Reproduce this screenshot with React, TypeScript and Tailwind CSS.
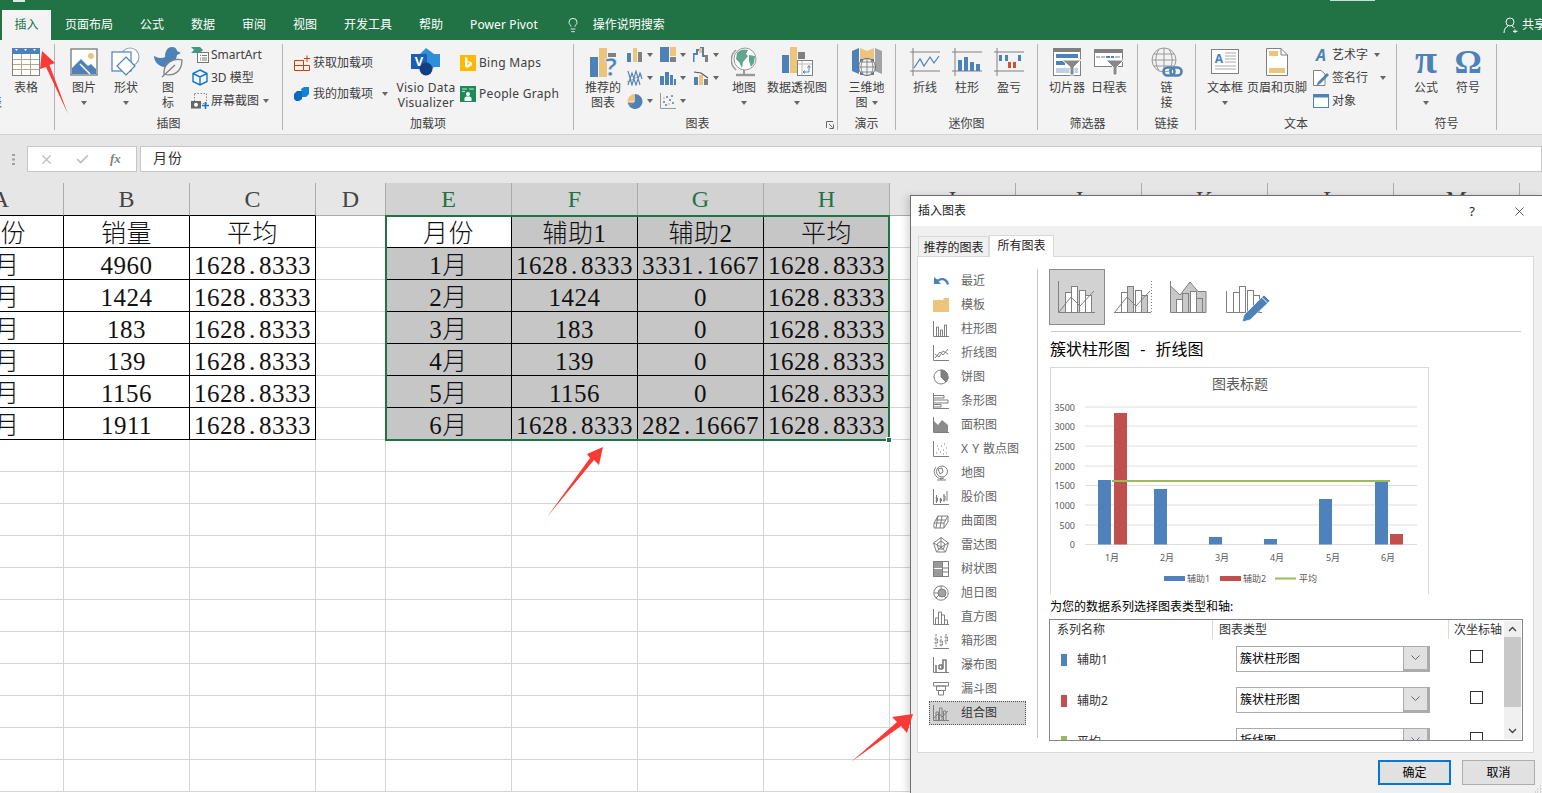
import React from 'react';
import { Lightbulb, X, Check } from 'lucide-react';

const BL = '#4d82b8', TN = '#ecc47c', GY = '#808080';
type P = { w: number; h: number; children?: React.ReactNode };
const S = ({ w, h, children }: P) => (
  <svg width={w} height={h} viewBox={`0 0 ${w} ${h}`} className="shrink-0 block">{children}</svg>
);
const Arrow = () => <span className="inline-block w-0 h-0 border-x-[3.5px] border-x-transparent border-t-[4px] border-t-[#666]" />;

const Big = ({ w, icon, l1, l2, arrow }: { w: string; icon: React.ReactNode; l1: string; l2?: string; arrow?: 'line2' | 'inline' }) => (
  <div className={`${w} shrink-0 flex flex-col items-center`}>
    <div className="h-[36px] flex items-center justify-center">{icon}</div>
    <div className="leading-[15px] whitespace-nowrap">{l1}</div>
    {l2 && <div className="leading-[15px] whitespace-nowrap flex items-center gap-1">{l2}{arrow === 'inline' && <Arrow />}</div>}
    {arrow === 'line2' && <div className="h-[15px] flex items-center"><Arrow /></div>}
  </div>
);
const Small = ({ icon, text, arrow, h, gap }: { icon: React.ReactNode; text: string; arrow?: string; h: string; gap: string }) => (
  <div className={`flex items-center ${h} whitespace-nowrap`}>
    <div className={`w-[16px] flex justify-center ${gap}`}>{icon}</div>
    <span>{text}</span>
    {arrow && <span className={`flex ${arrow}`}><Arrow /></span>}
  </div>
);
const Group = ({ w, label, children, labelCls }: { w: string; label: string; children: React.ReactNode; labelCls?: string }) => (
  <div className={`${w} h-[86px] shrink-0 relative flex flex-col border-r border-[#b4b4b4]`}>
    <div className="h-[72px] flex">{children}</div>
    <div className={`h-[14px] leading-[16px] text-center ${labelCls ?? ''}`}>{label}</div>
  </div>
);

/* ---------- ribbon icons ---------- */
const TableIc = () => (
  <S w={28} h={28}>
    <rect x=".5" y=".5" width="27" height="27" fill="#fff" stroke={GY} />
    <rect width="28" height="6" fill={BL} />
    <path d="M1 11.5H27M1 16.5H27M1 21.5H27M9.5 6V27M18.5 6V27" stroke="#b5a58c" fill="none" />
    <path d="M3 1h3l-1.5 2zM12 1h3l-1.5 2zM21 1h3l-1.5 2z" fill="#fff" />
  </S>
);
const PicIc = () => (
  <S w={28} h={28}>
    <rect x="1" y="1" width="26" height="26" fill="#fff" stroke={GY} strokeWidth="1.4" />
    <circle cx="21" cy="8" r="3" fill={TN} />
    <path d="M2 26V20L11 11 18 18 21 16 26 21V26Z" fill={BL} />
    <path d="M10 16 20 26" stroke="#fff" strokeWidth="1.4" />
  </S>
);
const ShapeIc = () => (
  <S w={30} h={30}>
    <circle cx="19" cy="10" r="9" fill="#fff" stroke="#8aa6c6" strokeWidth="1.2" />
    <rect x="1" y="5" width="19" height="19" fill="#fff" stroke={BL} strokeWidth="1.2" />
    <path d="M15 10 24 19 15 28 6 19Z" fill="#fff" stroke={BL} strokeWidth="1.2" />
  </S>
);
const IconsIc = () => (
  <S w={30} h={32}>
    <path d="M19 1c3 0 5 2 5 4l4 2-4 2c-1 8-7 13-13 12C5 20 1 15 1 10c4 2 8 3 11 1 0-5 2-10 7-10z" fill={BL} />
    <path d="M29 14C22 12 10 16 11 28 20 31 29 26 29 14z" fill="#f3f3f3" stroke={GY} strokeWidth="1.3" />
    <path d="M9 31 22 19" stroke={GY} strokeWidth="1.3" />
  </S>
);
const SmartIc = () => (
  <S w={18} h={16}>
    <path d="M0 0H9L12 3 9 6H0L3 3Z" fill="#3f9a82" />
    <rect x="6.5" y="5.5" width="11" height="10" fill="#fff" stroke="#777" />
    <path d="M9 8.5h1M11 8.5h5M9 11h1M11 11h5M9 13h1M11 13h5" stroke="#777" />
  </S>
);
const D3Ic = () => (
  <S w={16} h={17}>
    <path d="M8 1 15 4.5V12.5L8 16 1 12.5V4.5ZM1 4.5 8 8 15 4.5M8 8V16" fill="none" stroke="#1577c4" strokeWidth="1.4" />
  </S>
);
const ShotIc = () => (
  <S w={18} h={16}>
    <rect x="3.5" y=".5" width="12" height="10" fill="none" stroke="#888" strokeDasharray="1.5 1.5" />
    <rect x="0" y="8" width="10" height="7.5" fill="#666" />
    <circle cx="5" cy="11.8" r="2" fill="#fff" />
    <path d="M14.5 9V16M11 12.5H18" stroke="#1577c4" strokeWidth="1.6" />
  </S>
);
const GetIc = () => (
  <S w={16} h={16}>
    <path d="M.5 5.500H9.500V15.500H.5ZM.5 10.500H15.500V15.500H9.500M9.500 5.500V10.500" fill="none" stroke="#d83b01" />
    <path d="M13 .5V7M10 3.500H16" stroke="#d83b01" />
  </S>
);
const MineIc = () => (
  <S w={16} h={16}>
    <path d="M0 8 3 5H8V13L5 15H2L0 13Z" fill="#0a6bc1" />
    <path d="M7 3 10 1H15V8L12 11H8V6Z" fill="#0f85d8" />
  </S>
);
const VisioIc = () => (
  <S w={30} h={28}>
    <path d="M15 0 23 6H29V19H23L15 27 8 20V7Z" fill="#2e8fd8" />
    <rect x="0" y="6" width="16" height="15" fill="#1a5fb4" />
    <circle cx="15" cy="21" r="6.5" fill="#123f80" />
    <text x="8" y="18" textAnchor="middle" fontSize="13" fontWeight="700" fill="#fff">V</text>
  </S>
);
const BingIc = () => (
  <S w={16} h={16}>
    <rect width="16" height="16" fill="#ffb900" />
    <path d="M5 2 7.500 3V10L10 8.800 8.600 8 8 6 12 7.500V10L7.500 13 5 11.500Z" fill="#fff" />
  </S>
);
const PeopleIc = () => (
  <S w={16} h={16}>
    <rect width="16" height="16" fill="#1e8a5a" />
    <path d="M2 3H7M2 5.500H5M9 3H14" stroke="#bfe3d2" />
    <circle cx="8" cy="8" r="2" fill="#fff" />
    <path d="M4.500 15V12L6 10.500H10L11.500 12V15Z" fill="#fff" />
  </S>
);
const RecIc = () => (
  <S w={30} h={30}>
    <rect x="0" y="10" width="8" height="20" fill={BL} />
    <rect x="9" y="1" width="8" height="29" fill={TN} />
    <rect x="18" y="6" width="8" height="4" fill={GY} />
    <text x="21" y="29" textAnchor="middle" fontSize="25" fontWeight="700" fill={BL} stroke="#f3f3f3" strokeWidth=".6">?</text>
  </S>
);
const Mini = ({ n }: { n: number }) => {
  const a = [
    <><rect x="0" y="6" width="4" height="9" fill={BL} /><rect x="6" y="1" width="4" height="14" fill={TN} /><rect x="11" y="5" width="4" height="10" fill={GY} /></>,
    <><rect x="0" y="0" width="9" height="15" fill={BL} /><rect x="10" y="0" width="7" height="9" fill={TN} /><rect x="10" y="10" width="7" height="5" fill={GY} /></>,
    <><path d="M.5 15V7H4V3H8V1H10V9H13V15" fill="none" stroke={BL} strokeWidth="2" /><rect x="6" y="1" width="3" height="5" fill={TN} /><rect x="12" y="8" width="3" height="7" fill={GY} /></>,
    <><path d="M1 1 5 15 9 1 13 15M1 15 5 3 9 15 13 3 15 9" fill="none" stroke={BL} strokeWidth="1.1" /><path d="M0 12 15 5" stroke="#888" strokeWidth=".7" /></>,
    <><rect x="0" y="6" width="4" height="9" fill={BL} /><rect x="5" y="2" width="4" height="13" fill={BL} /><rect x="10" y="5" width="3" height="10" fill={BL} /><rect x="14" y="9" width="2" height="6" fill={BL} /></>,
    <><rect x="1" y="7" width="4" height="8" fill={BL} /><rect x="6" y="5" width="4" height="10" fill={TN} /><rect x="11" y="9" width="4" height="6" fill={GY} /><path d="M1 2 8 3 15 8" stroke="#555" strokeWidth="1.2" fill="none" /></>,
    <><path d="M8 1A7.500 7.500 0 1 1 2 13L8 8.500Z" fill={BL} /><path d="M8 1A7.500 7.500 0 0 0 .5 8.500H8Z" fill={TN} /><path d="M.5 9.500H7L2 13Z" fill={GY} /></>,
    <><path d="M.5 0V15.500H16" stroke="#999" fill="none" /><path d="M3 9h2M6 4h2M9 7h2M11 3h2M5 12h2M12 10h2" stroke={BL} strokeWidth="1.6" /><path d="M8 11h2M3 5h2" stroke={TN} strokeWidth="1.6" /></>,
  ];
  return <S w={16} h={16}>{a[n]}</S>;
};
const GlobeIc = () => (
  <S w={26} h={32}>
    <path d="M5 4A13 13 0 0 0 5 24" fill="none" stroke="#999" strokeWidth="1.6" />
    <circle cx="14" cy="13" r="11" fill="#fff" stroke="#999" />
    <path d="M6 7C9 3 14 3 17 4L15 8 17 10 12 16 11 22 8 16 5 13Z M18 9 24 10 23 17 20 21 18 15Z" fill="#5fa68d" />
    <path d="M5 29H24" stroke="#999" strokeWidth="2.4" />
    <path d="M13 24V28" stroke="#999" strokeWidth="2" />
  </S>
);
const PivotIc = () => (
  <S w={31} h={32}>
    <rect x="0" y="9" width="7" height="18" fill={BL} />
    <rect x="8" y="1" width="7" height="26" fill={TN} />
    <rect x="16" y="6" width="7" height="7" fill={GY} />
    <rect x="15.500" y="14.500" width="15" height="15" fill="#fff" stroke={GY} />
    <path d="M16 18H30M20 15V29" stroke="#bbb" />
    <path d="M21 26H27V20M25.500 21.500 27 19.500 28.500 21.500M23 24.500 21 26 23 27.500" stroke={BL} fill="none" />
  </S>
);
const Map3d = () => (
  <S w={30} h={30}>
    <path d="M0 4 7 1V27L0 24Z" fill={BL} />
    <path d="M8 1 15 4 22 1V12H8Z" fill={TN} />
    <path d="M23 1 30 4V27L23 24Z" fill="#a3a3a3" />
    <path d="M8 12H22V28H8Z" fill={BL} />
    <circle cx="15" cy="20" r="8.500" fill="#f3f3f3" stroke="#666" />
    <path d="M7 20H23M15 12V28M11 13A14 14 0 0 0 11 27M19 13A14 14 0 0 1 19 27M9 15H21M9 25H21" stroke="#666" strokeWidth=".7" fill="none" />
  </S>
);
const Spark = ({ c }: { c: React.ReactNode }) => (
  <S w={30} h={28}>
    <path d="M3 0V28M0 4H30M0 23H30" stroke={GY} fill="none" />
    {c}
  </S>
);
const SlicerIc = () => (
  <S w={28} h={28}>
    <rect x=".5" y=".5" width="27" height="27" fill="#fff" stroke={GY} />
    <rect width="28" height="4" fill={GY} />
    <rect x="3" y="6" width="22" height="4" fill={BL} />
    <rect x="3" y="13" width="9" height="4" fill={BL} />
    <rect x="3" y="20" width="22" height="5" fill="#bcd1e6" />
    <path d="M9 12H28L21 19V27H17V19Z" fill="#888" stroke="#fff" />
  </S>
);
const TimeIc = () => (
  <S w={30} h={26}>
    <rect x=".5" y=".5" width="28" height="17" fill="#fff" stroke={GY} />
    <rect width="29" height="4" fill={GY} />
    <path d="M2 8H6M7 8H11" stroke="#bbb" strokeWidth="2" /><path d="M12 8H16M17 8H20" stroke={BL} strokeWidth="2" /><path d="M21 8H26" stroke="#bbb" strokeWidth="2" />
    <path d="M12 11H30L23 18V26H19V18Z" fill="#888" stroke="#fff" />
  </S>
);
const LinkIc = () => (
  <S w={32} h={31}>
    <circle cx="13" cy="13" r="12" fill="#f3f3f3" stroke="#999" />
    <path d="M1 13H25M13 1V25M8 2A20 20 0 0 0 8 24M18 2A20 20 0 0 1 18 24M3 7H23M3 19H23" stroke="#999" fill="none" />
    <rect x="12.500" y="20.500" width="11" height="8" rx="4" fill="none" stroke={BL} strokeWidth="2.6" />
    <rect x="19.500" y="20.500" width="11" height="8" rx="4" fill="none" stroke={BL} strokeWidth="2.6" />
  </S>
);
const TextBoxIc = () => (
  <S w={28} h={26}>
    <rect x=".5" y=".5" width="27" height="24" fill="#fff" stroke={GY} />
    <text x="8" y="14" textAnchor="middle" fontSize="12" fontWeight="700" fill={BL}>A</text>
    <path d="M14 4H25M14 7H25M14 10H25M14 13H25M4 17H25M4 20H25" stroke="#aaa" />
  </S>
);
const HeaderIc = () => (
  <S w={22} h={28}>
    <path d="M.5.5H15L21.500 7V27.500H.5Z" fill="#fff" stroke={GY} />
    <path d="M15 .5V7H21.500" fill="none" stroke={GY} />
    <rect x="3" y="3" width="9" height="5" fill={TN} />
    <rect x="3" y="20" width="16" height="5" fill={TN} />
  </S>
);
const ArtIc = () => (
  <S w={16} h={16}><text x="8" y="14" textAnchor="middle" fontSize="16" fontWeight="700" fontStyle="italic" fill={BL}>A</text></S>
);
const SignIc = () => (
  <S w={16} h={16}>
    <path d="M.5.5H8L12 4V15.500H.5Z" fill="#fff" stroke={GY} />
    <path d="M14 3 16 5 7 14 3.500 15.500 5 12Z" fill={BL} />
  </S>
);
const ObjIc = () => (
  <S w={16} h={14}>
    <rect x=".5" y=".5" width="15" height="13" fill="#fff" stroke={BL} />
    <rect width="16" height="3.500" fill={BL} />
  </S>
);
const Greek = ({ t, size }: { t: string; size: number }) => (
  <S w={28} h={30}><text x="14" y="26" textAnchor="middle" fontSize={size} fontWeight="700" fill={BL} fontFamily="Liberation Serif">{t}</text></S>
);

/* ---------- ribbon ---------- */
const Ribbon = () => (
  <div className="h-[95px] shrink-0 bg-[#f3f3f3] border-b border-[#d2d2d2] pt-[4px] flex text-[12px] text-[#404040]">
    <Group w="w-[55px]" label="">
      <Big w="w-[52px]" icon={<TableIc />} l1="表格" />
      <span className="absolute left-[-10px] top-[51px] leading-[15px]">表</span>
    </Group>
    <Group w="w-[228px]" label="插图">
      <div className="w-[8px]" />
      <Big w="w-[42px]" icon={<PicIc />} l1="图片" arrow="line2" />
      <Big w="w-[42px]" icon={<ShapeIc />} l1="形状" arrow="line2" />
      <Big w="w-[42px]" icon={<IconsIc />} l1="图" l2="标" />
      <div className="ml-[3px] -mt-[1px] flex flex-col">
        <Small h="h-[23px]" gap="mr-[3px]" icon={<SmartIc />} text="SmartArt" />
        <Small h="h-[23px]" gap="mr-[3px]" icon={<D3Ic />} text="3D 模型" />
        <Small h="h-[23px]" gap="mr-[3px]" icon={<ShotIc />} text="屏幕截图" arrow="ml-1" />
      </div>
    </Group>
    <Group w="w-[291px]" label="加载项">
      <div className="w-[102px] ml-[11px] pt-[8px] flex flex-col gap-[9px]">
        <Small h="h-[22px]" gap="mr-[3px]" icon={<GetIc />} text="获取加载项" />
        <Small h="h-[22px]" gap="mr-[3px]" icon={<MineIc />} text="我的加载项" arrow="ml-[9px]" />
      </div>
      <Big w="w-[60px] tracking-[0.3px]" icon={<VisioIc />} l1="Visio Data" l2="Visualizer" />
      <div className="ml-[4px] pt-[8px] flex flex-col gap-[9px] tracking-[0.3px]">
        <Small h="h-[22px]" gap="mr-[3px]" icon={<BingIc />} text="Bing Maps" />
        <Small h="h-[22px]" gap="mr-[3px]" icon={<PeopleIc />} text="People Graph" />
      </div>
    </Group>
    <Group w="w-[264px]" label="图表" labelCls="pr-[16px]">
      <div className="w-[8px]" />
      <Big w="w-[42px]" icon={<div className="ml-[4px]"><RecIc /></div>} l1="推荐的" l2="图表" />
      <div className="w-[99px] ml-[3px] flex flex-wrap content-start -mt-[1px]">
        {[0, 1, 2, 3, 4, 5, 6, 7].map((n) => (
          <div key={n} className="w-[33px] h-[23px] flex items-center gap-[4px]"><Mini n={n} /><Arrow /></div>
        ))}
      </div>
      <Big w="w-[36px]" icon={<GlobeIc />} l1="地图" arrow="line2" />
      <div className="w-[5px]" />
      <Big w="w-[60px]" icon={<PivotIc />} l1="数据透视图" arrow="line2" />
      <svg width="8" height="8" viewBox="0 0 8 8" className="absolute left-[252px] top-[77px]">
        <path d="M.5 7V.5H7M3 3 6.500 6.500M7.500 3.500V7.500H3.500" stroke="#666" fill="none" />
      </svg>
    </Group>
    <Group w="w-[58px]" label="演示">
      <Big w="w-[57px]" icon={<Map3d />} l1="三维地" l2="图" arrow="inline" />
    </Group>
    <Group w="w-[142px]" label="迷你图">
      <div className="w-[8px]" />
      <Big w="w-[42px]" icon={<Spark c={<path d="M4 20 10 11 14 18 20 9 24 15 29 8" stroke={BL} strokeWidth="1.2" fill="none" />} />} l1="折线" />
      <Big w="w-[42px]" icon={<Spark c={<path d="M6 12h4v11H6zM12 9h4v14h-4zM18 14h4v9h-4zM24 16h4v7h-4z" fill={BL} />} />} l1="柱形" />
      <Big w="w-[42px]" icon={<Spark c={<><path d="M5 7h3v6H5zM11 7h3v6h-3zM24 7h3v6h-3z" fill={BL} /><path d="M14 14h3v6h-3zM19 14h3v6h-3z" fill="#d0532f" /></>} />} l1="盈亏" />
    </Group>
    <Group w="w-[100px]" label="筛选器">
      <div className="w-[8px]" />
      <Big w="w-[42px]" icon={<SlicerIc />} l1="切片器" />
      <Big w="w-[42px]" icon={<TimeIc />} l1="日程表" />
    </Group>
    <Group w="w-[58px]" label="链接">
      <Big w="w-[57px]" icon={<LinkIc />} l1="链" l2="接" />
    </Group>
    <Group w="w-[201px]" label="文本">
      <div className="w-[8px]" />
      <Big w="w-[42px]" icon={<TextBoxIc />} l1="文本框" arrow="line2" />
      <Big w="w-[62px]" icon={<HeaderIc />} l1="页眉和页脚" />
      <div className="ml-[5px] -mt-[1px] flex flex-col">
        <Small h="h-[23px]" gap="mr-[3px]" icon={<ArtIc />} text="艺术字" arrow="ml-[6px]" />
        <Small h="h-[23px]" gap="mr-[3px]" icon={<SignIc />} text="签名行" arrow="ml-[12px]" />
        <Small h="h-[23px]" gap="mr-[3px]" icon={<ObjIc />} text="对象" />
      </div>
    </Group>
    <Group w="w-[100px]" label="符号">
      <div className="w-[8px]" />
      <Big w="w-[42px]" icon={<Greek t="π" size={40} />} l1="公式" arrow="line2" />
      <Big w="w-[42px]" icon={<Greek t="Ω" size={34} />} l1="符号" />
    </Group>
  </div>
);

/* ---------- sheet ---------- */
const Val = ({ t }: { t: string }) => {
  const [a, b] = t.split('.');
  return <>{a}{b !== undefined && <><span className="inline-block w-[13px] text-left pl-[3px]">.</span>{b}</>}</>;
};
const L = ['A', 'B', 'C', 'D', 'E', 'F', 'G', 'H', 'I', 'J', 'K', 'L', 'M', 'N'];
const avg = '1628.8333';
const left = [['月份', '销量', '平均'], ['1月', '4960', avg], ['2月', '1424', avg], ['3月', '183', avg], ['4月', '139', avg], ['5月', '1156', avg], ['6月', '1911', avg]];
const right = [['月份', '辅助1', '辅助2', '平均'], ['1月', avg, '3331.1667', avg], ['2月', '1424', '0', avg], ['3月', '183', '0', avg], ['4月', '139', '0', avg], ['5月', '1156', '0', avg], ['6月', avg, '282.16667', avg]];

const Sheet = () => (
  <div className="flex-1 overflow-hidden bg-white font-['Liberation_Serif','Noto_Sans_CJK_SC',serif]">
    <div className="-ml-[62px] w-[1734px] grid grid-cols-[126px_126px_126px_70px_repeat(10,126px)]">
      {L.map((c, i) => {
        const sel = i >= 4 && i <= 7;
        const dark = i <= 2;
        return (
          <div key={c} className={`h-[33px] flex items-center justify-center text-[24px] border-r border-b border-r-[#ababab] ${dark ? 'border-b-black' : 'border-b-[#ababab]'} ${sel ? 'bg-[#d2d2d2] text-[#217346]' : 'bg-[#e6e6e6] text-[#444]'}`}>{c}</div>
        );
      })}
      {Array.from({ length: 18 }).flatMap((_, r) =>
        L.map((c, i) => {
          let t: string | undefined;
          let black = false, fill = false;
          if (r < 7 && i <= 2) { t = left[r][i]; black = true; }
          if (r < 7 && i >= 4 && i <= 7) { t = right[r][i - 4]; black = true; fill = !(r === 0 && i === 4); }
          return (
            <div key={c + r} className={`h-[32px] pt-[4px] flex items-center justify-center whitespace-nowrap overflow-hidden text-[25px] font-light tracking-[0.5px] text-[#111] border-r border-b ${black ? 'border-black' : 'border-[#d4d4d4]'} ${fill ? 'bg-[#c6c6c6]' : ''}`}>
              {t && <Val t={t} />}
            </div>
          );
        })
      )}
    </div>
  </div>
);

/* ---------- chart type list icons ---------- */
const LI = ({ children }: { children: React.ReactNode }) => (
  <svg width="16" height="16" viewBox="0 0 16 16" fill="none" stroke="#7f7f7f" className="shrink-0">{children}</svg>
);
const axis = 'M.5 0V15.500H16';
const listItems: [string, React.ReactNode][] = [
  ['最近', <svg width="16" height="16" viewBox="0 0 16 16" className="shrink-0"><path d="M1 4V11H8L5.600 8.600C7 7 10 6.500 12 8.500 13 9.500 13.500 10.500 14 12L16 11C15 6 10 3 5 6.500L3.500 6Z" fill={BL} /></svg>],
  ['模板', <svg width="16" height="16" viewBox="0 0 16 16" className="shrink-0"><path d="M0 3H10L11 1H16V15H0Z" fill={TN} /></svg>],
  ['柱形图', <LI><path d={axis} /><path d="M3.500 15V6h2v9M7.500 15V9h2v6M11.500 15V4h2v11" /></LI>],
  ['折线图', <LI><path d={axis} /><path d="M2 13 7 7 10 10 15 4M2 9 6 12 10 6 15 9" /></LI>],
  ['饼图', <LI><circle cx="8" cy="8" r="7" /><path d="M8 8V1A7 7 0 0 1 13 13Z" fill="#7f7f7f" /></LI>],
  ['条形图', <LI><path d="M.5 0V16M0 15.500H16" /><path d="M1 2.500H11V5H1M1 7H15V10H1M1 11.500H8V14H1" /></LI>],
  ['面积图', <svg width="16" height="16" viewBox="0 0 16 16" className="shrink-0"><path d="M.5 0V15.500H16" stroke="#7f7f7f" fill="none" /><path d="M1 4 5 8 9 3 15 8V15H1Z" fill="#8c8c8c" /></svg>],
  ['X Y 散点图', <LI><path d={axis} /><path d="M3 12h1M5 8h1M7 11h1M8 5h1M10 9h1M11 3h1M13 7h1M13 12h1M4 5h1M10 13h1" strokeDasharray="1 1" /></LI>],
  ['地图', <LI><circle cx="9" cy="6.500" r="5.500" /><path d="M3 2A7 7 0 0 0 11 13M4 15H13M8 12.500V15M5 4 9 3 10 7 7 9Z" /></LI>],
  ['股价图', <LI><path d={axis} /><path d="M3.500 6V14M2.500 9h2v3h-2M7.500 9V14M6.500 10h2v2h-2M11 5V13M10 7h2v4h-2M14 2V12" /></LI>],
  ['曲面图', <LI><path d="M1 10 5 3H15V9L11 15H1ZM1 10H11V15M11 10 15 3M3 7H13M5 3 3 15M9 3 7 15" /></LI>],
  ['雷达图', <LI><path d="M8 .5 15.500 6 12.500 15H3.500L.5 6ZM8 .5V10M.5 6 8 10 15.500 6M3.500 15 8 10 12.500 15M8 4 12 7 10.500 12H5.500L4 7Z" /></LI>],
  ['树状图', <svg width="16" height="16" viewBox="0 0 16 16" className="shrink-0"><rect x=".5" y=".5" width="15" height="15" fill="#fff" stroke="#7f7f7f" /><rect x="1" y="1" width="8" height="6" fill="#9a9a9a" /><rect x="1" y="8" width="8" height="7" fill="#9a9a9a" /><path d="M9.500 1V15M10 7H15M10 11H15" stroke="#7f7f7f" /></svg>],
  ['旭日图', <LI><circle cx="8" cy="8" r="7.200" /><circle cx="9" cy="8" r="4" fill="#a3a3a3" /><path d="M8 1V4M1 8H5M3 13 6 10M13 13 11 11" /></LI>],
  ['直方图', <LI><path d={axis} /><path d="M2.500 15V9h3V15M5.500 15V3h3V15M8.500 15V6h3V15M11.500 15V11h3V15" /></LI>],
  ['箱形图', <LI><path d="M.5 15.500H16" /><path d="M3 1V14M1.500 6h3v4h-3M8 3V14M6.500 8h3v4h-3M13 1V12M11.500 4h3v4h-3" strokeDasharray="2 .7" /></LI>],
  ['瀑布图', <LI><path d={axis} /><path d="M3 15V8M6 8V12M6 8H9V12H6M10 12V3H13V15" strokeWidth="1.6" /></LI>],
  ['漏斗图', <LI><path d="M.5 1.500H15.500V5H.5ZM3.500 5H12.500V9.500H3.500ZM5.500 9.500H10.500V14H5.500Z" /></LI>],
  ['组合图', <LI><path d={axis} /><path d="M3 15V7h2.500v8M6.500 15V3H9v12M10.500 15V6H13v9" /><path d="M1 13 6 8 9 12 15 6" /></LI>],
];

/* ---------- subtype icons ---------- */
const Bars = ({ f1, f2 }: { f1: string; f2: string }) => (
  <>
    <rect x="7.500" y="11.500" width="6" height="20" fill={f1} stroke={GY} />
    <rect x="13.500" y="5.500" width="6" height="26" fill={f2} stroke={GY} />
    <rect x="21.500" y="9.500" width="6" height="22" fill={f1} stroke={GY} />
    <rect x="27.500" y="14.500" width="6" height="17" fill={f2} stroke={GY} />
  </>
);
const SubBase = ({ children }: { children: React.ReactNode }) => (
  <svg width="48" height="44" viewBox="0 0 48 44" className="shrink-0 overflow-visible">{children}</svg>
);
const Sub1 = () => (
  <SubBase><g transform="translate(5 6)"><path d="M.5 0V31.500H37" stroke={GY} fill="none" /><Bars f1="#fff" f2="#fff" /><path d="M1 31 13 16 22 25 36 10" stroke={GY} fill="none" /></g></SubBase>
);
const Sub2 = () => (
  <SubBase><g transform="translate(5 6)"><path d="M0 31.500H37" stroke={GY} /><Bars f1="#fff" f2="#c8c8c8" /><path d="M1 31 13 16 22 25 36 10" stroke={GY} fill="none" /><path d="M37.500 0V32" stroke={GY} strokeDasharray="1 2" /></g></SubBase>
);
const Sub3 = () => (
  <SubBase><g transform="translate(5 6)"><path d="M.5 0V31.500H36V10.500H28L20 1 10 14 .5 5Z" fill="#c8c8c8" stroke={GY} /><rect x="6.500" y="18.500" width="6" height="13" fill="#fff" stroke={GY} /><rect x="12.500" y="12.500" width="6" height="19" fill="#c8c8c8" stroke={GY} /><rect x="20.500" y="10.500" width="6" height="21" fill="#fff" stroke={GY} /><rect x="26.500" y="17.500" width="6" height="14" fill="#c8c8c8" stroke={GY} /></g></SubBase>
);
const Sub4 = () => (
  <SubBase><g transform="translate(3 6)"><path d="M.5 31.500H36M.5 31.500V10" stroke={GY} /><Bars f1="#fff" f2="#fff" /><path d="M16 41 18 34 38 14 44 20 24 39Z" fill={BL} stroke="#fff" strokeWidth=".7" /><path d="M36 16.500 41.500 22" stroke="#fff" /></g></SubBase>
);

/* ---------- chart ---------- */
const Chart = () => {
  const ys: [string, number][] = [['3500', 407], ['3000', 426], ['2500', 446], ['2000', 466], ['1500', 485.5], ['1000', 505], ['500', 525], ['0', 544.5]];
  const bars: [number, number, string][] = [[1098, 480, '#4f81bd'], [1114, 413, '#c0504d'], [1154, 489, '#4f81bd'], [1209, 537, '#4f81bd'], [1264, 539, '#4f81bd'], [1319, 499, '#4f81bd'], [1375, 481, '#4f81bd'], [1390, 534, '#c0504d']];
  const xs = ['1月', '2月', '3月', '4月', '5月', '6月'];
  const cx = [1112, 1167, 1222, 1277, 1333, 1388];
  return (
    <svg width="377" height="226" viewBox="1051 368 377 226" className="block" fill="#595959">
      <text x="1240" y="389" textAnchor="middle" fontSize="14">图表标题</text>
      {ys.map(([t, y]) => (
        <g key={t}>
          <path d={`M1085 ${y}H1417`} stroke="#dedede" />
          <text x="1075" y={y + 3.5} textAnchor="end" fontSize="9">{t}</text>
        </g>
      ))}
      {bars.map(([x, y, c]) => <rect key={x} x={x} y={y} width="13" height={544.5 - y} fill={c} />)}
      <path d="M1112 481H1390" stroke="#9bbb59" strokeWidth="2" />
      {xs.map((t, i) => <text key={t} x={cx[i]} y="561" textAnchor="middle" fontSize="9">{t}</text>)}
      <rect x="1164" y="576" width="21" height="5" fill="#4f81bd" />
      <text x="1187" y="582" fontSize="9">辅助1</text>
      <rect x="1220" y="576" width="21" height="5" fill="#c0504d" />
      <text x="1243" y="582" fontSize="9">辅助2</text>
      <path d="M1275 578.5H1296" stroke="#9bbb59" strokeWidth="2" />
      <text x="1299" y="582" fontSize="9">平均</text>
    </svg>
  );
};

const Combo = ({ t }: { t: string }) => (
  <div className="w-[194px] h-[26px] mb-[2px] shrink-0 flex border border-[#ababab] bg-white">
    <div className="flex-1 pl-[3px] leading-[23px] text-black">{t}</div>
    <div className="w-[26px] bg-[#e1e1e1] border-l border-[#ababab] border-b-2 border-r-2 flex items-center justify-center">
      <svg width="9" height="5" viewBox="0 0 9 5"><path d="M.5.5 4.500 4.500 8.500.5" stroke="#666" fill="none" /></svg>
    </div>
  </div>
);
const SeriesRow = ({ c, n, t }: { c: string; n: string; t: string }) => (
  <div className="h-[41px] shrink-0 flex items-center">
    <div className="w-[186px] flex items-center pl-[11px]">
      <span className={`w-[6px] h-[12px] ${c}`} />
      <span className="ml-[10px] text-[#333]">{n}</span>
    </div>
    <Combo t={t} />
    <span className="ml-[40px] mb-[7px] w-[13px] h-[13px] border border-[#333] bg-white" />
  </div>
);

const Dialog = () => (
  <div className="absolute left-[910px] top-[195px] w-[632px] h-[598px] bg-[#f0f0f0] border-l border-t border-[#6e6e6e] shadow-[-4px_0_6px_rgba(0,0,0,0.12)] flex flex-col text-[12px] text-[#222]">
    <div className="h-[30px] shrink-0 bg-white flex items-center pl-[7px]">
      <span>插入图表</span>
      <span className="ml-auto mr-[37px] text-[13px] leading-none">?</span>
      <X size={15} strokeWidth={1.2} className="mr-[15px]" />
    </div>
    <div className="h-[30px] shrink-0 pl-[7px] pt-[9px] flex items-end">
      <div className="w-[71px] h-[20px] bg-[#f0f0f0] border border-b-0 border-[#d9d9d9] text-center leading-[22px]">推荐的图表</div>
      <div className="w-[65px] h-[22px] bg-white border border-b-0 border-[#d9d9d9] text-center leading-[20px] -mb-[1px] z-10">所有图表</div>
    </div>
    <div className="ml-[6px] w-[617px] h-[497px] shrink-0 bg-white border border-[#d9d9d9] flex pt-[12px]">
      <div className="w-[120px] h-[469px] shrink-0 border-r border-[#c8c8c8] pl-[11px]">
        {listItems.map(([t, ic], i) => {
          const on = i === 18;
          return (
            <div key={t} className={`w-[97px] h-[24px] flex items-center gap-[12px] ${on ? 'bg-[#d2d2d2] border border-dotted border-[#555] pl-[3px] text-[#333]' : 'pl-[4px] text-[#666]'}`}>
              {ic}<span className="whitespace-nowrap [word-spacing:1px]">{t}</span>
            </div>
          );
        })}
      </div>
      <div className="pl-[11px] flex flex-col">
        <div className="h-[56px] flex items-center">
          <div className="w-[56px] h-[56px] bg-[#d2d2d2] border border-[#8c8c8c] flex items-center justify-center"><Sub1 /></div>
          <div className="w-[56px] flex justify-center"><Sub2 /></div>
          <div className="w-[56px] flex justify-center"><Sub3 /></div>
          <div className="w-[60px] flex justify-center"><Sub4 /></div>
        </div>
        <div className="mt-[6px] ml-[2px] w-[470px] border-t border-[#c8c8c8]" />
        <div className="h-[35px] pl-[1px] text-[16px] leading-[34px] text-black whitespace-nowrap [word-spacing:6px]">簇状柱形图 - 折线图</div>
        <div className="w-[379px] h-[227px] shrink-0 ml-[1px] border-x border-t border-[#d9d9d9] overflow-hidden"><Chart /></div>
        <div className="h-[25px] pt-[5px] pl-[1px] leading-[16px] text-black">为您的数据系列选择图表类型和轴:</div>
        <div className="w-[474px] h-[122px] border border-[#82878f] flex overflow-hidden">
          <div className="flex-1 min-w-0 flex flex-col">
            <div className="h-[19px] shrink-0 flex items-start text-[#333]">
              <div className="w-[163px] pl-[7px] border-r border-[#d9d9d9] leading-[19px]">系列名称</div>
              <div className="w-[236px] pl-[6px] border-r border-[#d9d9d9] leading-[19px]">图表类型</div>
              <div className="pl-[5px] whitespace-nowrap leading-[19px]">次坐标轴</div>
            </div>
            <SeriesRow c="bg-[#4f81bd]" n="辅助1" t="簇状柱形图" />
            <SeriesRow c="bg-[#c0504d]" n="辅助2" t="簇状柱形图" />
            <SeriesRow c="bg-[#9bbb59]" n="平均" t="折线图" />
          </div>
          <div className="w-[17px] shrink-0 bg-[#f0f0f0] flex flex-col mr-[1px] mt-[1px] mb-[1px]">
            <div className="h-[16px] flex items-center justify-center"><svg width="9" height="6" viewBox="0 0 9 6"><path d="M1 5 4.500 1.500 8 5" stroke="#444" strokeWidth="1.4" fill="none" /></svg></div>
            <div className="h-[70px] bg-[#c8c8c8]" />
            <div className="flex-1 flex items-end justify-center pb-[5px]"><svg width="9" height="6" viewBox="0 0 9 6"><path d="M1 1 4.500 4.500 8 1" stroke="#444" strokeWidth="1.4" fill="none" /></svg></div>
          </div>
        </div>
      </div>
    </div>
    <div className="flex-1 flex justify-end items-start pt-[7px] pr-[7px] gap-[11px] text-black">
      <div className="w-[73px] h-[25px] bg-[#e1e1e1] border-2 border-[#0078d7] text-center leading-[21px]">确定</div>
      <div className="w-[73px] h-[25px] bg-[#e1e1e1] border border-[#adadad] text-center leading-[23px]">取消</div>
    </div>
    <svg width="8" height="8" viewBox="0 0 8 8" className="absolute right-0 bottom-0">
      <path d="M6 1h1M3 4h1M6 4h1M1 7h1M3 7h1M6 7h1" stroke="#b5b5b5" />
    </svg>
  </div>
);

export default function App() {
  return (
    <div className="relative w-[1542px] h-[793px] overflow-hidden flex flex-col bg-white text-[12px] font-['Noto_Sans','Noto_Sans_CJK_SC',sans-serif]">
      <div className="h-[40px] shrink-0 bg-[#217346] flex items-end text-white relative">
        <span className="absolute left-[13px] top-0 w-[12px] h-[2px] bg-[#dfe9e3]" />
        <span className="absolute left-[1330px] top-0 w-[45px] h-[1px] bg-[#cfdcd5]" />
        <div className="ml-[2px] w-[49px] h-[30px] bg-[#f3f3f3] text-[#217346] flex items-center justify-center">插入</div>
        <div className="h-[30px] ml-[14px] flex items-center gap-[27px] whitespace-nowrap">
          <span>页面布局</span><span>公式</span><span>数据</span><span>审阅</span><span>视图</span><span>开发工具</span><span>帮助</span><span className="tracking-[0.1px]">Power Pivot</span>
        </div>
        <div className="h-[30px] ml-[27px] flex items-center gap-[12px]">
          <Lightbulb size={16} strokeWidth={1.3} />
          <span>操作说明搜索</span>
        </div>
        <div className="h-[30px] ml-auto -mr-[4px] flex items-center gap-[3px]">
          <svg width="16" height="16" viewBox="0 0 16 16" fill="none" stroke="#fff"><circle cx="7" cy="5" r="4" /><path d="M1 16C1 12 3 10 5 9M9 9C10 9.500 11 10.300 11.500 11M12 12.500V16M10 14.300H14.500" /></svg>
          <span>共享</span>
        </div>
      </div>
      <Ribbon />
      <div className="h-[48px] shrink-0 bg-[#e6e6e6] flex items-start pt-[11px]">
        <div className="w-[27px] h-[26px] flex items-center justify-center">
          <svg width="3" height="11" viewBox="0 0 3 11"><path d="M0 1h3M0 5.500h3M0 10h3" stroke="#a0a0a0" strokeWidth="2" /></svg>
        </div>
        <div className="w-[110px] h-[26px] bg-white border border-[#c6c6c6] flex items-center text-[#bdbdbd]">
          <X size={15} strokeWidth={2} className="ml-[11px]" />
          <Check size={15} strokeWidth={2.6} className="ml-[21px]" />
          <span className="ml-[20px] text-[13px] italic font-bold text-[#808080] font-['Liberation_Serif',serif]">fx</span>
        </div>
        <div className="ml-[3px] flex-1 h-[26px] bg-white border border-[#c6c6c6] pl-[12px] text-[14px] leading-[22px] tracking-[1px] text-[#333]">月份</div>
      </div>
      <Sheet />
      <div className="absolute left-[385px] top-[215px] w-[505px] h-[226px] border-2 border-[#217346]" />
      <span className="absolute left-[886px] top-[437px] w-[6px] h-[6px] bg-[#217346] border border-white" />
      <Dialog />
      <svg width="1542" height="793" viewBox="0 0 1542 793" className="absolute inset-0 pointer-events-none">
        <path d="M42 51 55 63 49.500 65 68 114 46 67 40 69Z" fill="#f93a36" />
        <path d="M603 447 599 465 594 460 547 517 590 458 587 454Z" fill="#f93a36" />
        <path d="M913 714 907 733 901 726 851 762 897 722 892 717Z" fill="#f93a36" />
      </svg>
    </div>
  );
}
